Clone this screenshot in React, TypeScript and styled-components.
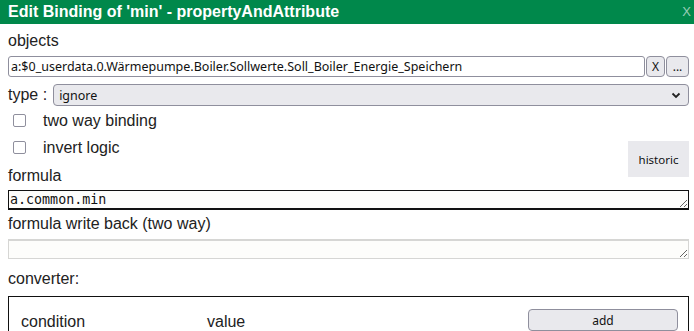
import React from "react";
import styled, { createGlobalStyle } from "styled-components";

const GlobalStyle = createGlobalStyle`
  html, body {
    margin: 0;
    overflow: hidden;
    background: #fff;
  }
  body {
    font-family: "Liberation Sans", Arial, sans-serif;
    font-size: 16px;
    color: #222;
  }
`;

const Dialog = styled.div`
  width: 694px;
  display: flex;
  flex-direction: column;
`;

const TitleBar = styled.div`
  height: 24px;
  background: #00884b;
  display: flex;
  align-items: center;
  justify-content: space-between;
  padding: 0 3px 0 8px;
`;

const Title = styled.span`
  color: #fff;
  font-weight: bold;
  font-size: 16px;
  line-height: 18px;
`;

const Close = styled.span`
  color: rgba(255, 255, 255, 0.6);
  font-size: 13px;
  line-height: 14px;
`;

const Body = styled.div`
  display: flex;
  flex-direction: column;
  padding: 0 5px 0 8px;
`;

const Label = styled.div<{ $top: number }>`
  margin-top: ${(p) => p.$top}px;
  line-height: 18px;
  height: 18px;
`;

const ObjectRow = styled.div`
  margin-top: 6px;
  display: flex;
  height: 21px;
`;

const TextInput = styled.input`
  flex: 1;
  min-width: 0;
  box-sizing: border-box;
  height: 21px;
  border: 1px solid #8f8f9d;
  border-radius: 3px;
  padding: 0 2px;
  font-family: "Noto Sans", sans-serif;
  font-size: 12.5px;
  color: #111;
  background: #fff;
`;

const SmallButton = styled.button<{ $w: number }>`
  width: ${(p) => p.$w}px;
  height: 21px;
  margin-left: 1px;
  box-sizing: border-box;
  border: 1px solid #8f8f9d;
  border-radius: 4px;
  background: #e9e9ed;
  font-family: "Noto Sans", sans-serif;
  font-size: 12px;
  color: #111;
  padding: 0;
`;

const TypeRow = styled.div`
  margin-top: 7px;
  display: flex;
  align-items: center;
  gap: 6px;
  height: 22px;
`;

const SelectWrap = styled.div`
  position: relative;
  flex: 1;
  height: 22px;
`;

const Select = styled.select`
  appearance: none;
  width: 100%;
  height: 22px;
  box-sizing: border-box;
  border: 1px solid #8f8f9d;
  border-radius: 4px;
  background: #e9e9ed;
  font-family: "Noto Sans", sans-serif;
  font-size: 12.5px;
  color: #111;
  padding: 0 5px;
`;

const Chevron = styled.svg`
  position: absolute;
  right: 8px;
  top: 8px;
  pointer-events: none;
`;

const Middle = styled.div`
  margin-top: 1px;
  display: flex;
  justify-content: space-between;
  align-items: flex-start;
`;

const LeftCol = styled.div`
  display: flex;
  flex-direction: column;
`;

const CheckRow = styled.label`
  height: 27px;
  display: flex;
  align-items: center;
  gap: 17px;
  padding-left: 5px;
  line-height: 18px;
`;

const Box = styled.input`
  appearance: none;
  margin: 0;
  width: 13px;
  height: 13px;
  box-sizing: border-box;
  border: 1px solid #8f8f9d;
  border-radius: 2px;
  background: #fff;
`;

const HistoricButton = styled.button`
  margin-top: 34px;
  width: 61px;
  height: 36px;
  border: none;
  background: #e9e9ed;
  font-family: "Noto Sans", sans-serif;
  font-size: 11.5px;
  color: #111;
  padding: 0;
`;

const Formula = styled.textarea<{ $top: number; $disabled?: boolean }>`
  margin-top: ${(p) => p.$top}px;
  box-sizing: border-box;
  width: 681px;
  height: 20px;
  resize: both;
  padding: 1px 1px;
  font-family: "DejaVu Sans Mono", monospace;
  font-size: 13.33px;
  line-height: 16px;
  color: #111;
  background: #fdfdfb;
  border: ${(p) => (p.$disabled ? "1px solid #d6d6d4" : "1px solid #111")};
  border-top-width: ${(p) => (p.$disabled ? 2 : 1)}px;
  border-bottom-width: ${(p) => (p.$disabled ? 1 : 2)}px;
  border-radius: 0;
  outline: none;
  overflow: hidden;
`;

const Converter = styled.div`
  margin-top: 8px;
  border: 1px solid #111;
  height: 80px;
  display: grid;
  grid-template-columns: 186px 1fr 150px;
  align-items: start;
  padding: 12px 10px 0 12px;
`;

const Cell = styled.span`
  margin-top: 4px;
  line-height: 18px;
`;

const AddButton = styled.button`
  height: 22px;
  box-sizing: border-box;
  border: 1px solid #8f8f9d;
  border-radius: 4px;
  background: #e9e9ed;
  font-family: "Noto Sans", sans-serif;
  font-size: 12px;
  color: #111;
`;

export default function App() {
  return (
    <Dialog>
      <GlobalStyle />
      <TitleBar>
        <Title>Edit Binding of 'min' - propertyAndAttribute</Title>
        <Close>X</Close>
      </TitleBar>
      <Body>
        <Label $top={8}>objects</Label>
        <ObjectRow>
          <TextInput
            readOnly
            value="a:$0_userdata.0.Wärmepumpe.Boiler.Sollwerte.Soll_Boiler_Energie_Speichern"
          />
          <SmallButton $w={19}>X</SmallButton>
          <SmallButton $w={23}>...</SmallButton>
        </ObjectRow>
        <TypeRow>
          <span>type :</span>
          <SelectWrap>
            <Select defaultValue="ignore">
              <option value="ignore">ignore</option>
            </Select>
            <Chevron width="10" height="7" viewBox="0 0 10 7">
              <path d="M1.5 1.5 L5 5 L8.5 1.5" fill="none" stroke="#222" strokeWidth="1.8" />
            </Chevron>
          </SelectWrap>
        </TypeRow>
        <Middle>
          <LeftCol>
            <CheckRow>
              <Box type="checkbox" />
              two way binding
            </CheckRow>
            <CheckRow>
              <Box type="checkbox" />
              invert logic
            </CheckRow>
            <Label $top={6}>formula</Label>
          </LeftCol>
          <HistoricButton>historic</HistoricButton>
        </Middle>
        <Formula $top={5} rows={1} defaultValue="a.common.min" />
        <Label $top={5}>formula write back (two way)</Label>
        <Formula $top={6} rows={1} $disabled disabled defaultValue="" />
        <Label $top={11}>converter:</Label>
        <Converter>
          <Cell>condition</Cell>
          <Cell>value</Cell>
          <AddButton>add</AddButton>
        </Converter>
      </Body>
    </Dialog>
  );
}
